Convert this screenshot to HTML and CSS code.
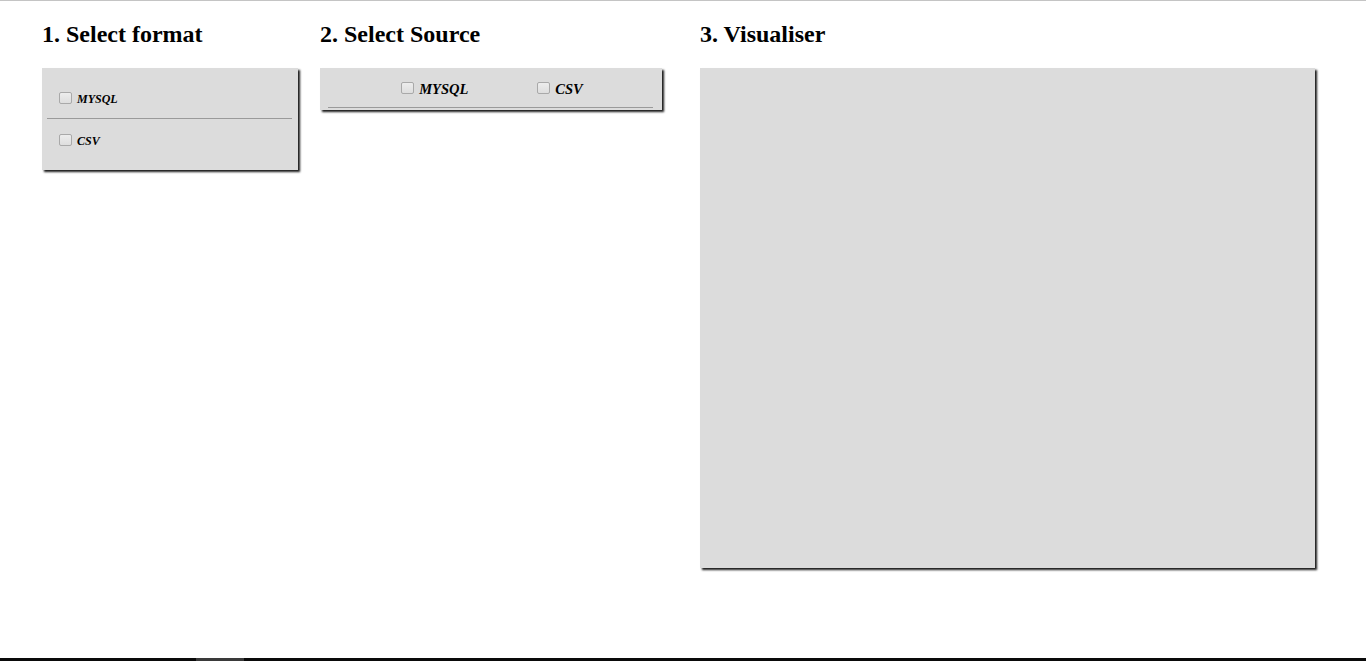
FILE: index.html
```html
<!DOCTYPE html>
<html>
<head>
<meta charset="utf-8">
<link rel="stylesheet" href="styles.css">
</head>
<body>
<div class="page">
  <div class="col col-format">
    <h2 class="title">1. Select format</h2>
    <div class="panel panel-format">
      <label class="opt"><input type="checkbox"><span>MYSQL</span></label>
      <hr class="sep">
      <label class="opt"><input type="checkbox"><span>CSV</span></label>
    </div>
  </div>
  <div class="col col-source">
    <h2 class="title">2. Select Source</h2>
    <div class="panel panel-source">
      <div class="row">
        <label class="opt2"><input type="checkbox"><span>MYSQL</span></label>
        <label class="opt2"><input type="checkbox"><span>CSV</span></label>
      </div>
      <hr class="sep2">
    </div>
  </div>
  <div class="col col-vis">
    <h2 class="title">3. Visualiser</h2>
    <div class="panel panel-vis"></div>
  </div>
</div>
<div class="bottombar"><div class="thumb"></div></div>
</body>
</html>
```

FILE: styles.css
```css
html, body {
  margin: 0;
  padding: 0;
  height: 100%;
  background: #fff;
}
body {
  font-family: "Liberation Serif", "Times New Roman", serif;
  border-top: 1px solid #c4c4c4;
  box-sizing: border-box;
  position: relative;
  overflow: hidden;
}
.page {
  display: flex;
  padding-left: 42px;
}
.col-format { width: 256px; margin-right: 22px; }
.col-source { width: 342px; margin-right: 38px; }
.col-vis { width: 615px; }
.title {
  font-size: 24px;
  font-weight: bold;
  margin: 20px 0 0 0;
  line-height: 27px;
  height: 47px;
  color: #000;
}
.panel {
  background: #dcdcdc;
  box-shadow: 2px 2px 2px #1a1a1a;
  box-sizing: border-box;
}
.panel-format {
  height: 102px;
  padding: 22px 6px 0 5px;
}
.opt {
  display: flex;
  align-items: center;
  padding-left: 11px;
  height: 15px;
  font-size: 12px;
  font-style: italic;
  font-weight: bold;
}
input[type="checkbox"] {
  appearance: none;
  -webkit-appearance: none;
  box-sizing: border-box;
  border: 1px solid #a9a9a9;
  border-radius: 2px;
  background: linear-gradient(#ededed, #dedede);
}
.opt input, .opt2 input {
  margin: 0 5px 0 1px;
  width: 13px;
  height: 12px;
}
.opt span { position: relative; top: 2px; }
.sep {
  border: 0;
  border-top: 1px solid #9a9a9a;
  margin: 13px 0 13px 0;
  height: 0;
}
.panel-source {
  height: 42px;
  padding: 12px 9px 0 8px;
}
.row {
  display: flex;
  justify-content: center;
  gap: 68px;
  padding-left: 2px;
}
.opt2 {
  display: flex;
  align-items: center;
  height: 16px;
  font-size: 14.5px;
  font-style: italic;
  font-weight: bold;
}
.opt2 span { position: relative; top: 1px; }
.sep2 {
  border: 0;
  border-top: 1px solid #9a9a9a;
  margin: 11px 0 0 0;
  height: 0;
}
.panel-vis {
  height: 500px;
}
.bottombar {
  position: absolute;
  left: 0;
  right: 0;
  bottom: 0;
  height: 3px;
  background: #0a0a0a;
}
.thumb {
  position: absolute;
  left: 196px;
  width: 48px;
  top: 0;
  bottom: 0;
  background: #3a3a3a;
}
```
